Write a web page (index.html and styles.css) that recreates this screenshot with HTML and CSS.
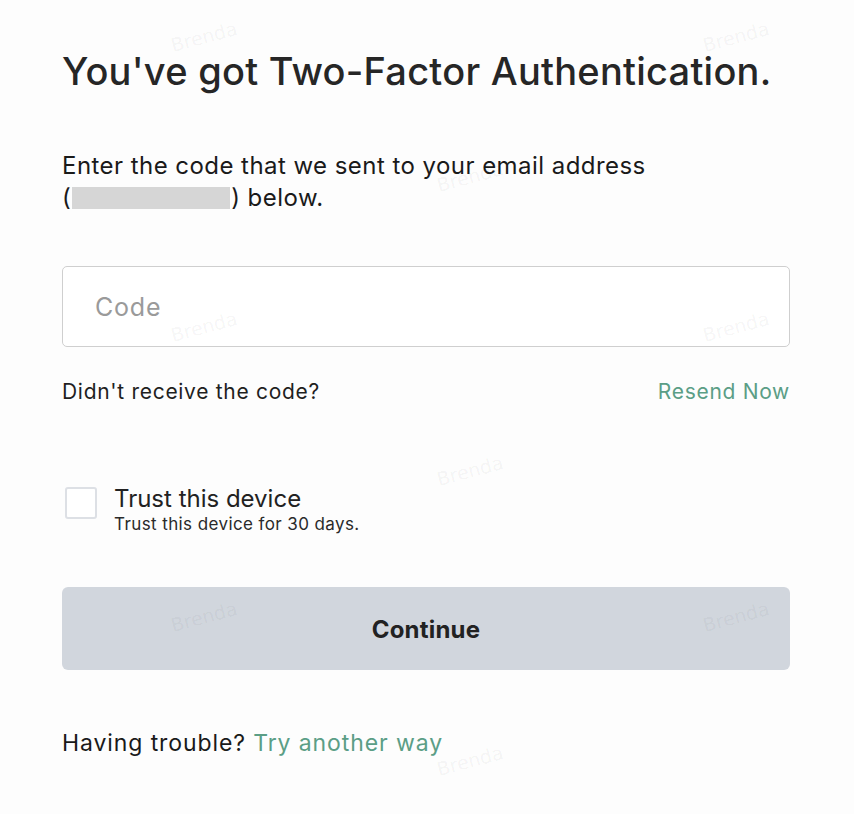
FILE: index.html
```html
<!DOCTYPE html>
<html lang="en">
<head>
<meta charset="utf-8">
<title>Two-Factor Authentication</title>
<link rel="stylesheet" href="styles.css">
</head>
<body>
<main class="page">
  <h1 class="title">You've got Two-Factor Authentication.</h1>
  <p class="intro">Enter the code that we sent to your email address<br>(<span class="redacted"></span>) below.</p>
  <div class="field"><input class="code-input" type="text" placeholder="Code"></div>
  <div class="resend-row">
    <span class="resend-q">Didn't receive the code?</span>
    <a class="link resend" href="#">Resend Now</a>
  </div>
  <label class="trust">
    <span class="checkbox"></span>
    <span class="trust-text">
      <span class="trust-title">Trust this device</span>
      <span class="trust-sub">Trust this device for 30 days.</span>
    </span>
  </label>
  <button class="continue" type="button">Continue</button>
  <p class="trouble">Having trouble? <a class="link" href="#">Try another way</a></p>
</main>
<div class="watermarks" aria-hidden="true">
  <span class="wm" style="left:174px;top:34px">Brenda</span>
  <span class="wm" style="left:706px;top:34px">Brenda</span>
  <span class="wm" style="left:440px;top:174px">Brenda</span>
  <span class="wm" style="left:174px;top:324px">Brenda</span>
  <span class="wm" style="left:706px;top:324px">Brenda</span>
  <span class="wm" style="left:440px;top:468px">Brenda</span>
  <span class="wm" style="left:174px;top:614px">Brenda</span>
  <span class="wm" style="left:706px;top:614px">Brenda</span>
  <span class="wm" style="left:440px;top:758px">Brenda</span>
</div>
</body>
</html>
```
FILE: styles.css
```css
* { box-sizing: border-box; }
html, body { margin: 0; padding: 0; }
body {
  background: #fdfdfd;
  font-family: "Inter", "Noto Sans", sans-serif;
  color: #1f1f1f;
  width: 854px;
  height: 814px;
  overflow: hidden;
  position: relative;
}
.page {
  padding: 44px 64px 0 62px;
  display: flex;
  flex-direction: column;
}
.title {
  margin: 0;
  font-size: 38px;
  font-weight: 500;
  line-height: 54px;
  color: #262626;
  letter-spacing: 0.25px;
}
.intro {
  margin: 52px 0 0;
  font-size: 24px;
  line-height: 32px;
  color: #1a1a1a;
  letter-spacing: 0.45px;
}
.redacted {
  display: inline-block;
  width: 158px;
  height: 22px;
  background: #d6d6d6;
  vertical-align: -3px;
  margin: 0 1px 0 1px;
}
.field { margin-top: 52px; }
.code-input {
  width: 100%;
  height: 81px;
  border: 1px solid #cfcfcf;
  border-radius: 5px;
  background: #fff;
  padding: 0 32px;
  font-family: inherit;
  font-size: 25px;
  letter-spacing: 0.8px;
  color: #222;
  outline: none;
}
.code-input::placeholder { color: #9a9a9a; }
.resend-row {
  margin-top: 31px;
  display: flex;
  justify-content: space-between;
  align-items: baseline;
  font-size: 21px;
  line-height: 28px;
  letter-spacing: 0.7px;
}
.resend-q { color: #1f1f1f; }
.link { color: #5b9e86; text-decoration: none; }
.trust {
  margin-top: 79px;
  display: flex;
  align-items: flex-start;
  gap: 17px;
}
.checkbox {
  width: 32px;
  height: 32px;
  margin: 2px 0 0 3px;
  border: 2px solid #dde0e5;
  border-radius: 3px;
  background: #fff;
  flex: none;
}
.trust-text { display: flex; flex-direction: column; }
.trust-title { font-size: 24px; line-height: 28px; color: #222; }
.trust-sub { font-size: 17px; line-height: 22px; color: #2a2a2a; letter-spacing: 0.4px; }
.continue {
  margin-top: 52px;
  width: 100%;
  height: 83px;
  padding-top: 2px;
  border: none;
  border-radius: 6px;
  background: #d1d6dd;
  font-family: inherit;
  font-size: 24px;
  font-weight: 700;
  letter-spacing: 0.2px;
  color: #222;
}
.trouble {
  margin: 58px 0 0;
  font-size: 23px;
  line-height: 30px;
  color: #1a1a1a;
  letter-spacing: 0.9px;
}
.watermarks {
  position: absolute;
  inset: 0;
  pointer-events: none;
}
.wm {
  position: absolute;
  font-family: "DejaVu Sans", sans-serif;
  font-size: 19px;
  color: rgba(0, 0, 0, 0.05);
  transform: rotate(-15deg);
  transform-origin: left bottom;
}
```
